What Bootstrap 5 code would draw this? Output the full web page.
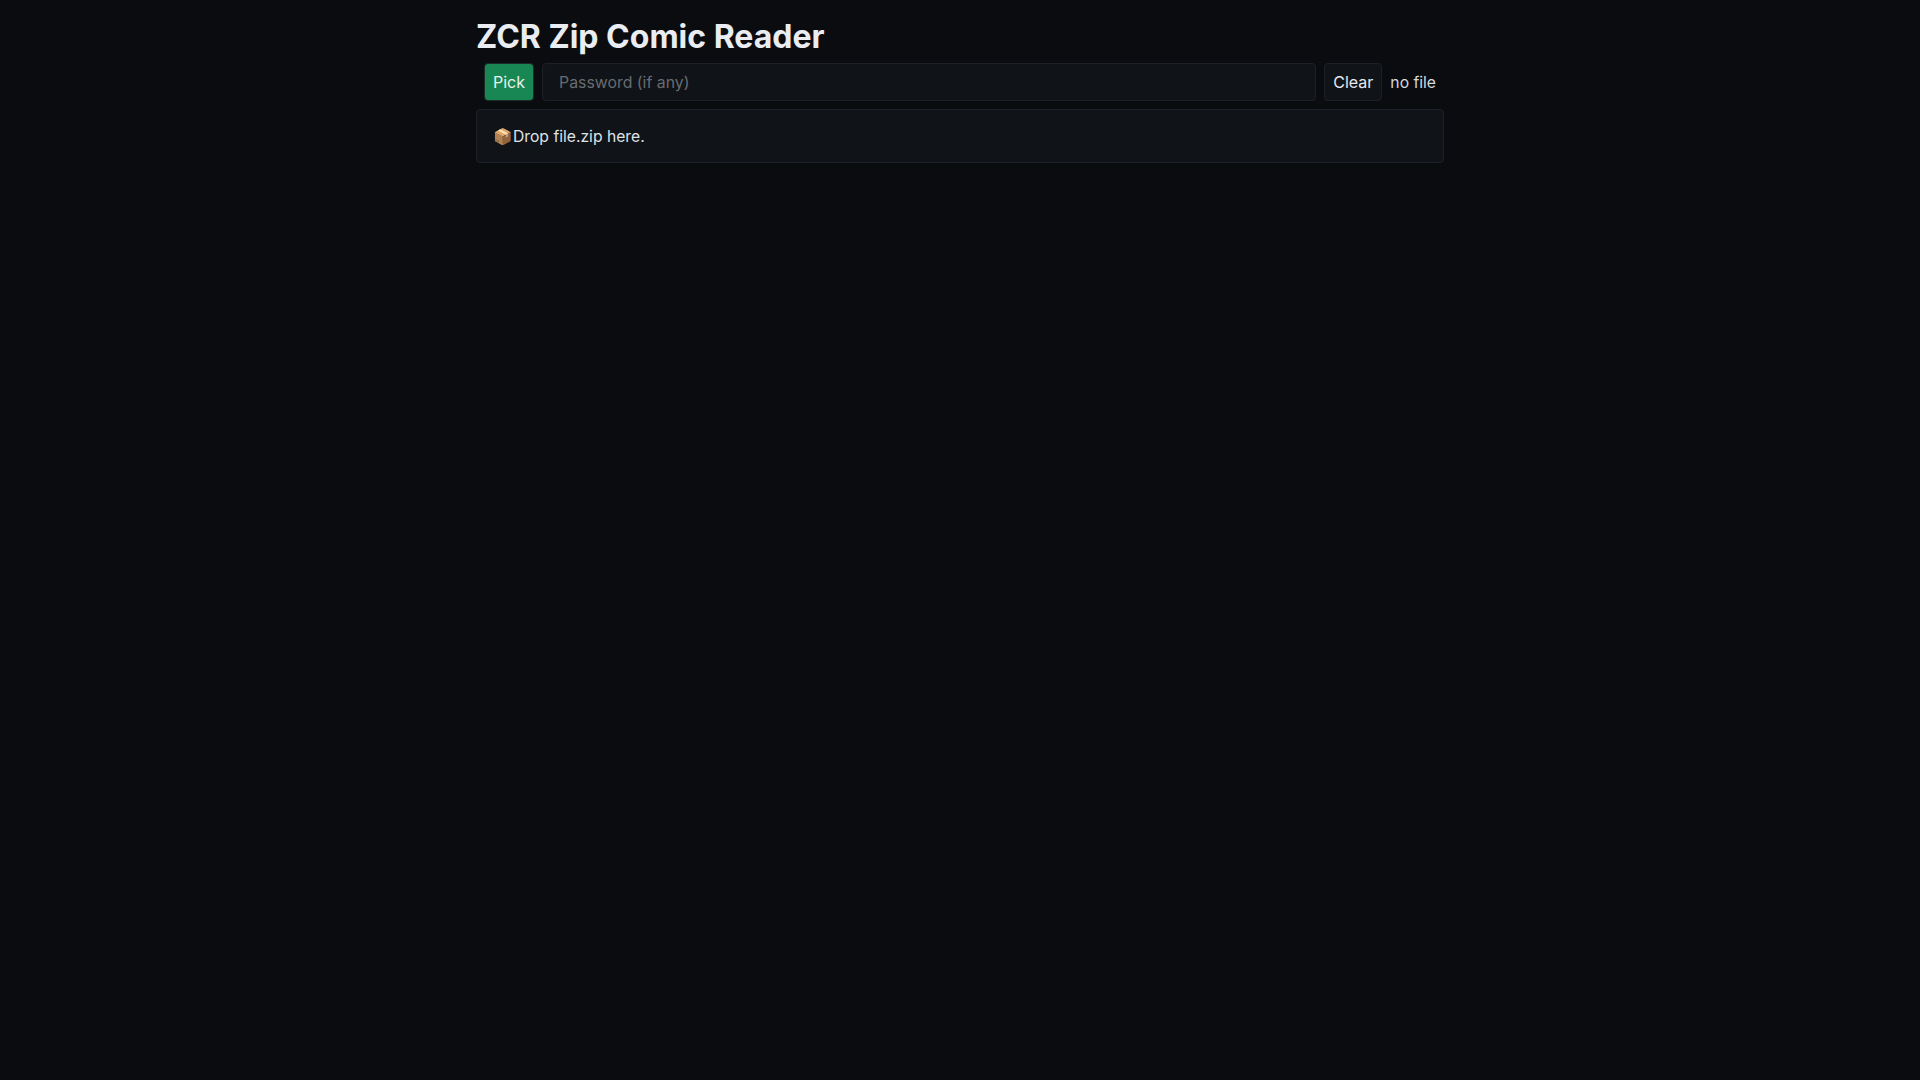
<!doctype html>
<html lang="en" data-bs-theme="dark">
<head>
<meta charset="utf-8">
<title>ZCR Zip Comic Reader</title>
<link href="https://cdn.jsdelivr.net/npm/bootstrap@5.3.0/dist/css/bootstrap.min.css" rel="stylesheet">
<style>
html, body { background: #0a0c10; }
body { font-family: Inter, "Liberation Sans", sans-serif; font-size: 16px; color: #e6e9ee; min-height: 100vh; }
.zcr-wrap { width: 968px; margin: 0 auto; }
.zcr-title { font-size: 32px; font-weight: 700; line-height: 37px; margin: 18px 0 0; padding: 0; color: #e9edf2; }
.zcr-bar { padding: 8px; gap: 8px; height: 54px; }
.zcr-btn { height: 38px; padding: 0 8px; border-radius: 4px; font-size: 16px; line-height: 1; border: 1px solid #1d2026; background: #101317; color: #e6e9ee; }
.zcr-pick { background: #198754; border-color: #1c2a28; color: #e6f2ec; }
.zcr-input { flex: 1 1 auto; width: auto; height: 38px; padding: 0 16px; border-radius: 4px; font-size: 15.85px; border: 1px solid #1d2026; background: #101317; color: #e6e9ee; }
.zcr-input::placeholder { color: #686c72; opacity: 1; }
.zcr-input:focus { background: #101317; color: #e6e9ee; border-color: #1d2026; box-shadow: none; }
.zcr-status { color: #d6d9de; white-space: nowrap; font-size: 15.7px; padding-top: 1px; }
.zcr-panel { height: 54px; padding: 1px 16px 0; border: 1px solid #1d2026; border-radius: 4px; background: #101317; color: #dfe2e7; font-size: 15.7px; }
</style>
</head>
<body class="m-0">
<main class="zcr-wrap">
  <h1 class="zcr-title">ZCR Zip Comic Reader</h1>
  <div class="zcr-bar d-flex align-items-center">
    <button class="btn zcr-btn zcr-pick" type="button">Pick</button>
    <input class="form-control zcr-input" type="password" placeholder="Password (if any)">
    <button class="btn zcr-btn" type="button">Clear</button>
    <span class="zcr-status">no file</span>
  </div>
  <div class="zcr-panel d-flex align-items-center"><span>📦Drop file.zip here.</span></div>
</main>
<script src="https://cdn.jsdelivr.net/npm/bootstrap@5.3.0/dist/js/bootstrap.bundle.min.js"></script>
</body>
</html>
